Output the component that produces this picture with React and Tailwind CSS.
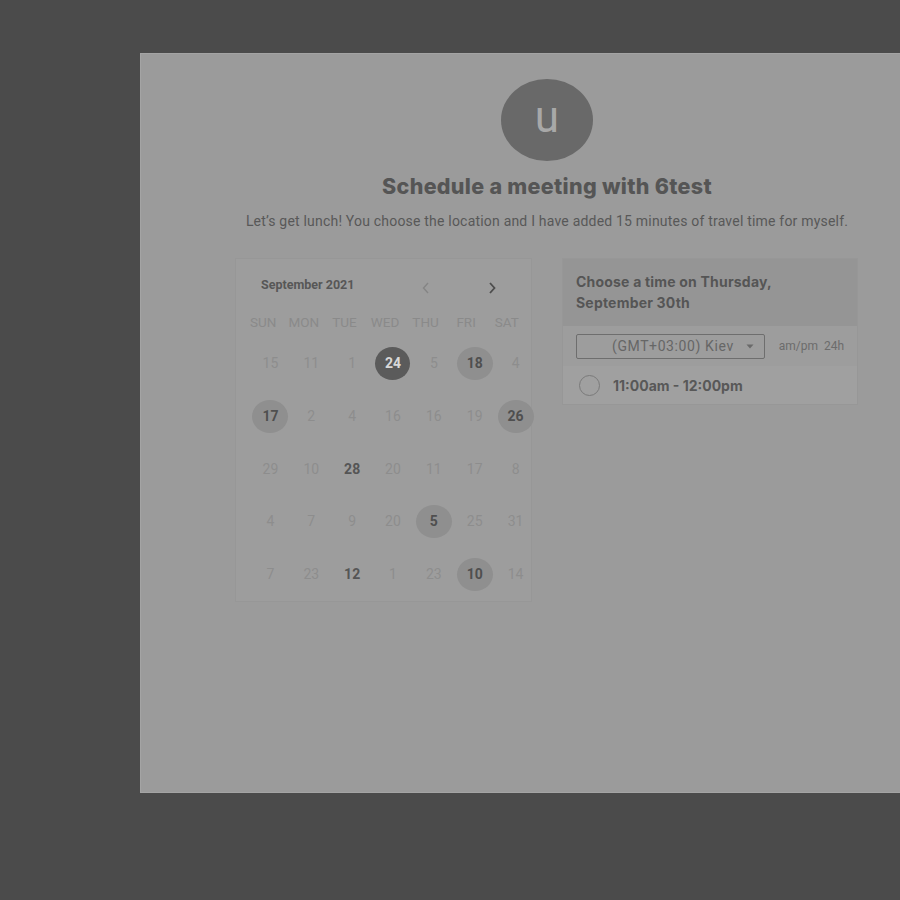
import React from 'react';

const weekdays = ['SUN', 'MON', 'TUE', 'WED', 'THU', 'FRI', 'SAT'];

// kind: 0 = disabled, 1 = available, 2 = available with circle, 3 = selected
const weeks = [
  [[15, 0], [11, 0], [1, 0], [24, 3], [5, 0], [18, 2], [4, 0]],
  [[17, 2], [2, 0], [4, 0], [16, 0], [16, 0], [19, 0], [26, 2]],
  [[29, 0], [10, 0], [28, 1], [20, 0], [11, 0], [17, 0], [8, 0]],
  [[4, 0], [7, 0], [9, 0], [20, 0], [5, 2], [25, 0], [31, 0]],
  [[7, 0], [23, 0], [12, 1], [1, 0], [23, 0], [10, 2], [14, 0]],
];

function Day({ value, kind }) {
  if (kind === 3) {
    return (
      <div className="w-[35px] h-[33px] rounded-[50%] bg-[#5b5b5b] text-[#d8d8d8] font-bold flex items-center justify-center">
        {value}
      </div>
    );
  }
  if (kind === 2) {
    return (
      <div className="w-[36px] h-[33px] rounded-[50%] bg-[#8f8f8f] text-[#4f4f4f] font-bold flex items-center justify-center">
        {value}
      </div>
    );
  }
  if (kind === 1) {
    return <div className="text-[#555555] font-bold">{value}</div>;
  }
  return <div className="text-[#8d8d8d]">{value}</div>;
}

export default function App() {
  return (
    <div className="h-[900px] w-[900px] overflow-hidden bg-[#4b4b4b] pt-[53px] pl-[140px] font-['Roboto',sans-serif]">
      <div className="w-[814px] h-[740px] bg-[#9b9b9b] border border-[#a4a4a4] flex flex-col items-center pt-[25px]">
        {/* avatar */}
        <div className="w-[92px] h-[82px] rounded-[50%] bg-[#696969] flex items-center justify-center text-[#a8a8a8] text-[44px] leading-none pb-[6px]">
          u
        </div>

        <h1 className="mt-[9px] text-[21.5px] font-extrabold text-[#555555] font-['Inter',sans-serif] tracking-[0.3px]">
          Schedule a meeting with 6test
        </h1>
        <p className="mt-[9px] text-[14px] tracking-[0.2px] text-[#585858]">
          Let’s get lunch! You choose the location and I have added 15 minutes of travel time for myself.
        </p>

        <div className="mt-[26px] flex gap-[30px] items-start -ml-[1px]">
          {/* calendar */}
          <div className="w-[297px] h-[344px] bg-[#9d9d9d] border border-[#979797] pt-[16px]">
            <div className="flex items-center pl-[25px]">
              <span className="text-[12.5px] font-bold text-[#575757] w-[164px]">September 2021</span>
              <span className="w-[66px]">
                <svg width="10" height="14" viewBox="0 0 10 14" fill="none" className="ml-[-4px] mt-[6px]">
                  <path d="M7 2 L2.5 7 L7 12" stroke="#858585" strokeWidth="1.4" />
                </svg>
              </span>
              <svg width="10" height="14" viewBox="0 0 10 14" fill="none" className="mt-[6px] -ml-[4px]">
                <path d="M3 2 L7.5 7 L3 12" stroke="#4d4d4d" strokeWidth="1.8" />
              </svg>
            </div>

            <div className="grid grid-cols-7 w-[284px] ml-[7px] mt-[17px] text-[13.5px] text-[#8a8a8a]">
              {weekdays.map((w) => (
                <div key={w} className="text-center">{w}</div>
              ))}
            </div>

            <div className="ml-[14px] mt-[5px] w-[286px]">
              {weeks.map((week, i) => (
                <div key={i} className="grid grid-cols-7 h-[52.7px] items-center text-[14px]">
                  {week.map(([v, k], j) => (
                    <div key={j} className="flex justify-center">
                      <Day value={v} kind={k} />
                    </div>
                  ))}
                </div>
              ))}
            </div>
          </div>

          {/* time picker */}
          <div className="w-[296px] bg-[#9d9d9d] border border-[#979797]">
            <div className="bg-[#959595] px-[13px] pt-[12px] h-[67px] text-[14px] font-bold text-[#555555] leading-[21px] font-['Inter',sans-serif] tracking-[0.2px]">
              Choose a time on Thursday,
              <br />
              September 30th
            </div>
            <div className="flex items-center h-[40px] px-[13px]">
              <div className="w-[191px] h-[25px] border border-[#6e6e6e] rounded-[2px] flex items-center pl-[35px] pr-[10px] text-[14px] tracking-[0.6px] text-[#666666]">
                <span className="flex-1">(GMT+03:00) Kiev</span>
                <svg width="8" height="5" viewBox="0 0 8 5">
                  <path d="M0.5 0.5 L7.5 0.5 L4 4.5 Z" fill="#6a6a6a" />
                </svg>
              </div>
              <span className="ml-[14px] text-[12px] text-[#6c6c6c] whitespace-pre">am/pm  24h</span>
            </div>
            <div className="flex items-center h-[38px] bg-[#a0a0a0] px-[16px]">
              <div className="w-[21px] h-[21px] rounded-full border border-[#7a7a7a]"></div>
              <span className="ml-[13px] text-[14px] font-bold text-[#585858] font-['Inter',sans-serif]">
                11:00am - 12:00pm
              </span>
            </div>
          </div>
        </div>
      </div>
    </div>
  );
}
